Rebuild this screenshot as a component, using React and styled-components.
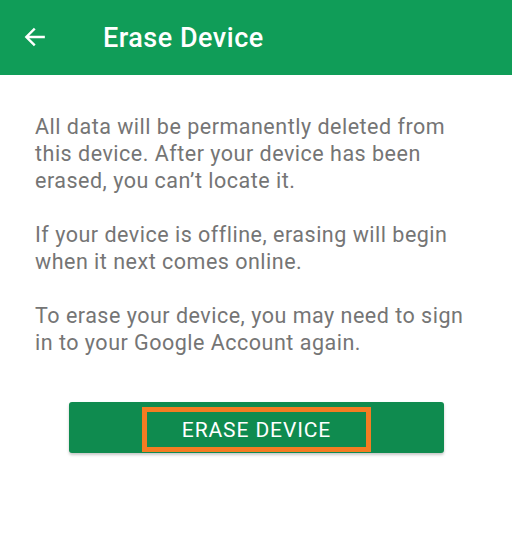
import React from 'react';
import styled, { createGlobalStyle } from 'styled-components';

const GlobalStyle = createGlobalStyle`
  html, body {
    margin: 0;
    padding: 0;
    background: #ffffff;
  }
  body {
    font-family: Roboto, "Noto Sans", Arial, sans-serif;
    -webkit-font-smoothing: antialiased;
  }
`;

const Screen = styled.div`
  width: 512px;
  height: 536px;
  background: #ffffff;
  display: flex;
  flex-direction: column;
`;

const AppBar = styled.header`
  height: 75px;
  background: #109d58;
  display: flex;
  align-items: center;
  padding-left: 20px;
  box-sizing: border-box;
`;

const BackButton = styled.button`
  width: 30px;
  height: 30px;
  padding: 0;
  border: none;
  background: transparent;
  display: flex;
  align-items: center;
  justify-content: center;
  margin-top: -2px;
  cursor: pointer;
`;

const Title = styled.h1`
  margin: 0 0 0 53px;
  font-size: 27px;
  font-weight: 500;
  color: #ffffff;
  letter-spacing: 0.5px;
`;

const Content = styled.main`
  padding: 38px 35px 0 35px;
  display: flex;
  flex-direction: column;
`;

const Paragraph = styled.p`
  margin: 0 0 27px 0;
  font-size: 21.5px;
  line-height: 27px;
  letter-spacing: 0.5px;
  color: #757575;
`;

const ButtonRow = styled.div`
  display: flex;
  justify-content: center;
  margin-top: 19px;
`;

const PrimaryButton = styled.button`
  width: 375px;
  height: 51px;
  border: none;
  border-radius: 3px;
  background: #0f8b4f;
  box-shadow: 0 2px 3px rgba(0, 0, 0, 0.22);
  display: flex;
  align-items: center;
  justify-content: center;
  padding: 0;
  cursor: pointer;
`;

const Label = styled.span`
  width: 229px;
  height: 45px;
  box-sizing: border-box;
  border: ${p => (p.highlighted ? '5px solid #f47c22' : 'none')};
  display: flex;
  align-items: center;
  justify-content: center;
  font-family: Roboto, Arial, sans-serif;
  font-size: 21px;
  color: #ffffff;
  letter-spacing: 0.9px;
  margin-left: 1px;
  margin-top: 4px;
`;

const BackArrow = () => (
  <svg width="26" height="26" viewBox="0 0 24 24" fill="none">
    <path
      d="M20 12H4.5M11 5l-7 7 7 7"
      stroke="#ffffff"
      strokeWidth="2.2"
      strokeLinecap="square"
    />
  </svg>
);

export default function App() {
  return (
    <>
      <GlobalStyle />
      <Screen>
        <AppBar>
          <BackButton aria-label="Back">
            <BackArrow />
          </BackButton>
          <Title>Erase Device</Title>
        </AppBar>
        <Content>
          <Paragraph>
            All data will be permanently deleted from<br />
            this device. After your device has been<br />
            erased, you can’t locate it.
          </Paragraph>
          <Paragraph>
            If your device is offline, erasing will begin<br />
            when it next comes online.
          </Paragraph>
          <Paragraph>
            To erase your device, you may need to sign<br />
            in to your Google Account again.
          </Paragraph>
        </Content>
        <ButtonRow>
          <PrimaryButton>
            <Label highlighted>ERASE DEVICE</Label>
          </PrimaryButton>
        </ButtonRow>
      </Screen>
    </>
  );
}
